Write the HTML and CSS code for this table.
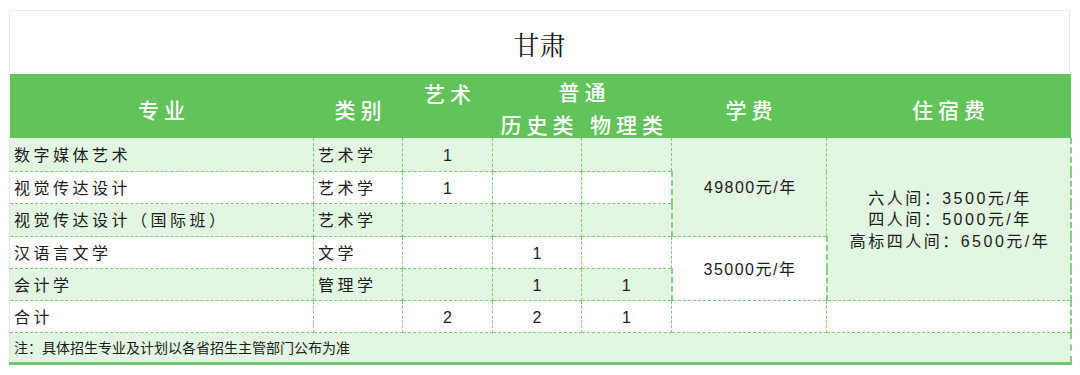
FILE: index.html
```html
<!DOCTYPE html>
<html lang="zh-CN">
<head>
<meta charset="utf-8">
<title>甘肃</title>
<link rel="stylesheet" href="styles.css">
</head>
<body>
<div class="sheet">
  <div class="title">甘肃</div>
  <table class="plan">
    <colgroup>
      <col class="c-major">
      <col class="c-type">
      <col class="c-num">
      <col class="c-num2">
      <col class="c-num">
      <col class="c-fee">
      <col class="c-dorm">
    </colgroup>
    <thead>
      <tr class="h1">
        <th rowspan="2" class="mid">专业</th>
        <th rowspan="2" class="mid">类别</th>
        <th rowspan="2" class="top">艺术</th>
        <th colspan="2" class="grp">普通</th>
        <th rowspan="2" class="mid">学费</th>
        <th rowspan="2" class="mid">住宿费</th>
      </tr>
      <tr class="h2">
        <th>历史类</th>
        <th>物理类</th>
      </tr>
    </thead>
    <tbody>
      <tr class="g r34">
        <td class="txt">数字媒体艺术</td>
        <td class="txt">艺术学</td>
        <td class="num">1</td>
        <td class="num"></td>
        <td class="num"></td>
        <td rowspan="3" class="fee">49800元/年</td>
        <td rowspan="5" class="fee dorm">六人间：3500元/年<br>四人间：5000元/年<br>高标四人间：6500元/年</td>
      </tr>
      <tr class="w r32">
        <td class="txt">视觉传达设计</td>
        <td class="txt">艺术学</td>
        <td class="num">1</td>
        <td class="num"></td>
        <td class="num"></td>
      </tr>
      <tr class="g r33">
        <td class="txt">视觉传达设计（国际班）</td>
        <td class="txt">艺术学</td>
        <td class="num"></td>
        <td class="num"></td>
        <td class="num"></td>
      </tr>
      <tr class="w r32">
        <td class="txt">汉语言文学</td>
        <td class="txt">文学</td>
        <td class="num"></td>
        <td class="num">1</td>
        <td class="num"></td>
        <td rowspan="2" class="fee">35000元/年</td>
      </tr>
      <tr class="g r32">
        <td class="txt">会计学</td>
        <td class="txt">管理学</td>
        <td class="num"></td>
        <td class="num">1</td>
        <td class="num">1</td>
      </tr>
      <tr class="w r32">
        <td class="txt">合计</td>
        <td class="txt"></td>
        <td class="num">2</td>
        <td class="num">2</td>
        <td class="num">1</td>
        <td></td>
        <td></td>
      </tr>
      <tr class="g note">
        <td colspan="7">注：具体招生专业及计划以各省招生主管部门公布为准</td>
      </tr>
    </tbody>
  </table>
</div>
</body>
</html>
```

FILE: styles.css
```css
html, body {
  margin: 0;
  padding: 0;
  background: #ffffff;
}

body {
  padding: 10px 0 0 9px;
  font-family: "Liberation Sans", "Noto Sans CJK SC", sans-serif;
  color: #1c1c1c;
}

.sheet {
  width: 1061px;
}

.title {
  box-sizing: border-box;
  height: 64px;
  border: 1px solid #ebebeb;
  border-bottom: none;
  text-align: center;
  font-family: "Noto Serif CJK SC", "Noto Sans CJK SC", serif;
  font-size: 26px;
  line-height: 66px;
  color: #111111;
}

.plan {
  width: 1061px;
  table-layout: fixed;
  border-collapse: collapse;
  border-spacing: 0;
}

.c-major { width: 304px; }
.c-type { width: 89px; }
.c-num { width: 90px; }
.c-num2 { width: 89px; }
.c-fee { width: 155px; }
.c-dorm { width: 244px; }

.plan th {
  background: #62c35b;
  color: #ffffff;
  font-family: "Noto Sans CJK SC", sans-serif;
  font-weight: 500;
  font-size: 21px;
  letter-spacing: 5px;
  padding: 0 0 0 5px;
  text-align: center;
  line-height: 24px;
  border: none;
  vertical-align: middle;
}

.plan .h1 th.mid {
  padding-top: 5px;
  height: 59px;
}

.plan .h1 th.top {
  vertical-align: top;
  padding-top: 7px;
  height: 57px;
}

.plan .h1 th.grp {
  height: 31px;
  padding-top: 1px;
}

.plan .h2 th {
  height: 29px;
  padding-top: 3px;
}

.plan td {
  border: 1px dashed #78cf74;
  font-size: 16px;
  line-height: 20px;
  padding: 2px 0 0 0;
  vertical-align: middle;
}

.plan td:first-child {
  border-left: 1px solid #e4e4e4;
}

.plan td:last-child {
  border-right: 2px dashed #84d380;
}

.plan tbody tr:first-child td {
  border-top: none;
}

.g td { background: #e2f6e1; }
.w td { background: #ffffff; }

.r34 td { height: 31px; }
.r33 td { height: 30px; }
.r32 td { height: 29px; }

.txt {
  padding-left: 4px !important;
  letter-spacing: 3.5px;
  text-align: left;
}

.num {
  text-align: center;
}

.fee {
  text-align: center;
  letter-spacing: 1.5px;
  padding-left: 2px !important;
}

.g td.fee, .g td.dorm { background: #e2f6e1; }
.w td.fee { background: #ffffff; }

.dorm {
  line-height: 21.5px !important;
  letter-spacing: 2.5px;
  padding-left: 3px !important;
}

.note td {
  height: 29px;
  font-size: 14px;
  letter-spacing: 0;
  padding: 0 0 0 4px;
  border-right: 2px dashed #84d380;
  border-bottom: 3px solid #6cc868;
  border-top: 1px dashed #78cf74;
  border-left: 1px solid #e4e4e4;
}
```
